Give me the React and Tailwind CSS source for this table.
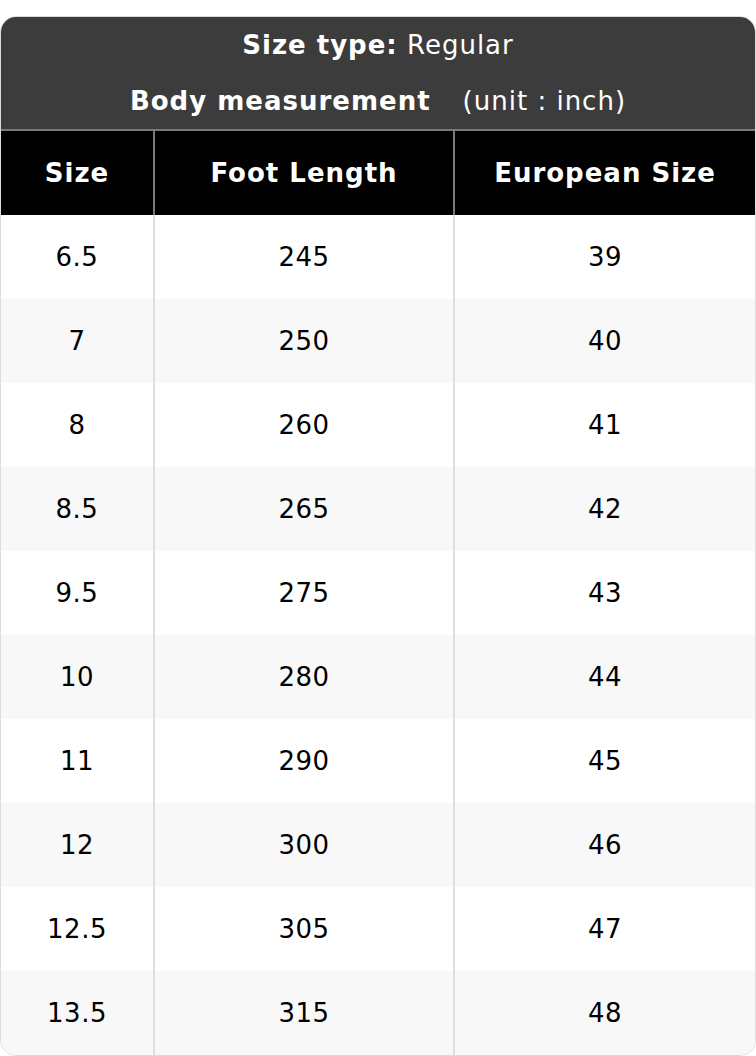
const rows = [
  ['6.5', '245', '39'],
  ['7', '250', '40'],
  ['8', '260', '41'],
  ['8.5', '265', '42'],
  ['9.5', '275', '43'],
  ['10', '280', '44'],
  ['11', '290', '45'],
  ['12', '300', '46'],
  ['12.5', '305', '47'],
  ['13.5', '315', '48'],
];

const App = () => {
  return (
    <div className="min-h-screen bg-white pt-4 font-['DejaVu_Sans',sans-serif]">
      <div className="rounded-2xl overflow-hidden border border-[#dcdcdc]">
        {/* Title */}
        <div className="bg-[#3c3c3c] text-white text-center border-b-2 border-[#7a7a7a] text-[26px] tracking-[1px]">
          <div className="h-14 flex items-center justify-center">
            <span className="font-bold">Size type:</span>&nbsp;Regular
          </div>
          <div className="h-14 flex items-center justify-center">
            <span className="font-bold">Body measurement</span>
            <span className="ml-8">(unit : inch)</span>
          </div>
        </div>

        {/* Column headers */}
        <div className="flex bg-black text-white font-bold text-[26px] tracking-[1px] h-[84px]">
          <div className="w-[154px] flex items-center justify-center border-r-2 border-[#7a7a7a]">Size</div>
          <div className="w-[300px] flex items-center justify-center border-r-2 border-[#7a7a7a]">Foot Length</div>
          <div className="flex-1 flex items-center justify-center">European Size</div>
        </div>

        {/* Body */}
        {rows.map((r, i) => (
          <div key={i} className={`flex h-[84px] text-[26px] tracking-[0.5px] text-black ${i % 2 ? 'bg-[#f8f8f8]' : 'bg-white'}`}>
            <div className="w-[154px] flex items-center justify-center border-r-2 border-[#dedede]">{r[0]}</div>
            <div className="w-[300px] flex items-center justify-center border-r-2 border-[#dedede]">{r[1]}</div>
            <div className="flex-1 flex items-center justify-center">{r[2]}</div>
          </div>
        ))}
      </div>
    </div>
  );
};

export default App;
